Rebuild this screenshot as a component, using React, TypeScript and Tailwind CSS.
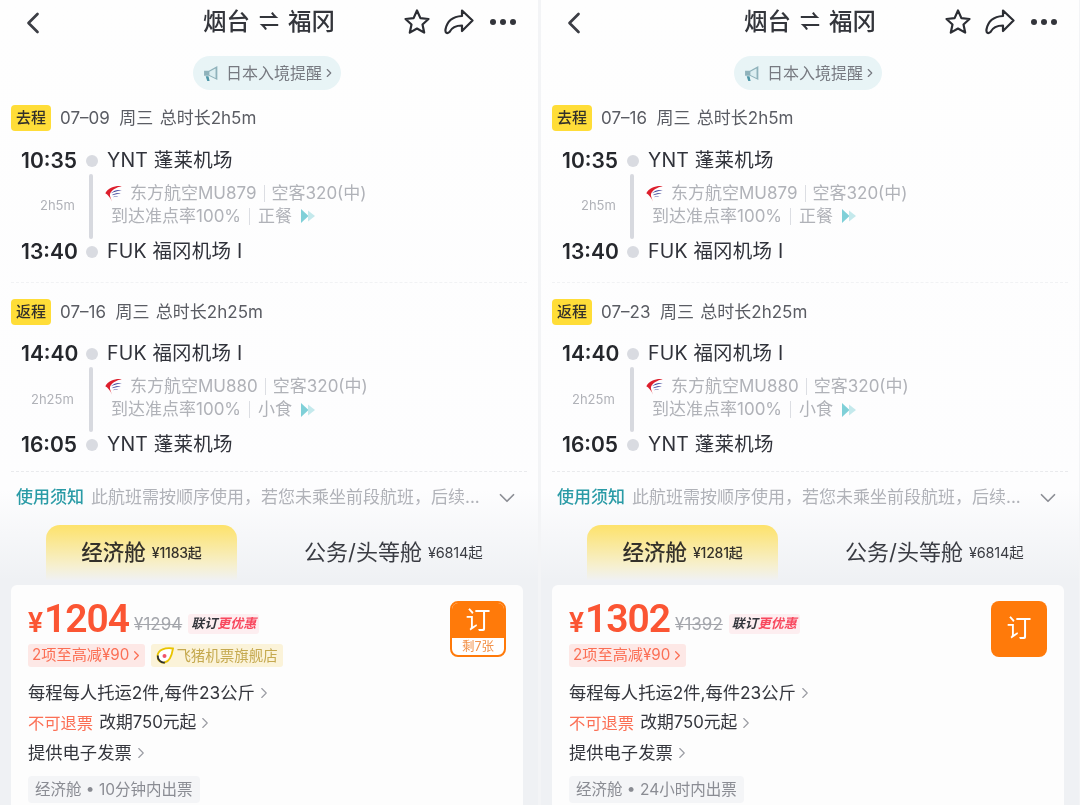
import React from 'react'
import { ChevronDown, ChevronLeft, ChevronRight } from 'lucide-react'

type Leg = {
  tag: string
  date: string
  total: string
  from: [string, string]
  to: [string, string]
  duration: string
  durationClass: string
  flight: string
  meal: string
}

type Ticket = {
  cabinFrom: string
  price: string
  oldPrice: string
  sellerBadge: boolean
  ticketing: string
  legs: Leg[]
}

const FONT = 'font-["Inter","Noto_Sans_CJK_SC",sans-serif]'

const tickets: Ticket[] = [
  {
    cabinFrom: '¥1183起',
    price: '1204',
    oldPrice: '¥1294',
    sellerBadge: true,
    ticketing: '经济舱 • 10分钟内出票',
    legs: [
      { tag: '去程', date: '07–09', total: '2h5m', from: ['10:35', 'YNT 蓬莱机场'], to: ['13:40', 'FUK 福冈机场 I'], duration: '2h5m', durationClass: 'pl-[40px]', flight: 'MU879', meal: '正餐' },
      { tag: '返程', date: '07–16', total: '2h25m', from: ['14:40', 'FUK 福冈机场 I'], to: ['16:05', 'YNT 蓬莱机场'], duration: '2h25m', durationClass: 'pl-[31px]', flight: 'MU880', meal: '小食' },
    ],
  },
  {
    cabinFrom: '¥1281起',
    price: '1302',
    oldPrice: '¥1392',
    sellerBadge: false,
    ticketing: '经济舱 • 24小时内出票',
    legs: [
      { tag: '去程', date: '07–16', total: '2h5m', from: ['10:35', 'YNT 蓬莱机场'], to: ['13:40', 'FUK 福冈机场 I'], duration: '2h5m', durationClass: 'pl-[40px]', flight: 'MU879', meal: '正餐' },
      { tag: '返程', date: '07–23', total: '2h25m', from: ['14:40', 'FUK 福冈机场 I'], to: ['16:05', 'YNT 蓬莱机场'], duration: '2h25m', durationClass: 'pl-[31px]', flight: 'MU880', meal: '小食' },
    ],
  },
]

const StarIcon = () => (
  <svg width="28" height="28" viewBox="0 0 28 28" fill="none" stroke="#2b2d33" strokeWidth="2.2" strokeLinejoin="round">
    <path d="M14 2.500l3.400 7.600 8.100.9-6 5.500 1.700 8.100L14 20.500l-7.200 4.100 1.700-8.100-6-5.500 8.100-.9z" />
  </svg>
)

const ShareIcon = () => (
  <svg width="30" height="28" viewBox="0 0 30 28" fill="none" stroke="#2b2d33" strokeWidth="2.2" strokeLinejoin="round">
    <path d="M18 2.500L28.500 12.500 18 23v-5.500c-6 0-10 1.500-12.500 6.500C3 26 1 25 1.500 21.500 3 13 9.500 8.500 18 8z" />
  </svg>
)

const HornIcon = () => (
  <svg width="17" height="17" viewBox="0 0 16 16">
    <path d="M1 5.500h4.500l8-4.500v13l-8-4H1z" fill="#8fb2bb" />
    <path d="M6 6.300l5.800-3v9L6 9.300z" fill="#dceef1" />
    <path d="M2.500 10.500h2.700l1 4.500H4z" fill="#4f97a8" />
  </svg>
)

const AirlineLogo = () => (
  <svg width="17" height="17" viewBox="0 0 16 16">
    <path d="M15.800 1.200C10.500.2 3 2.500.3 7.800c2.300 1.200 4.700 4.300 6.300 7.700-1.400-3.200-2.300-5.600-1.900-7C6.100 4.600 10.500 2.300 15.800 1.200z" fill="#dd1f2d" />
    <path d="M15.800 4.800C11.800 4.200 8 5.200 5.600 7.800c3-1.300 6.300-2.200 10.200-3z" fill="#343a94" />
    <path d="M14.800 8C11.600 7.500 8.600 8 6.400 9.600c2.700-.7 5.500-1.200 8.400-1.600z" fill="#343a94" />
    <path d="M12.500 10.800c-1.900-.4-3.700-.2-5.400.7 1.900-.3 3.600-.5 5.400-.7z" fill="#343a94" />
  </svg>
)

const MoreArrows = () => (
  <svg width="15" height="14" viewBox="0 0 15 14" className="ml-[9px]">
    <path d="M0 0l7.500 7L0 14z" fill="#7fd0d8" />
    <path d="M7 1.500l7 5.500-7 5.500z" fill="#c4e9ec" />
  </svg>
)

const FliggyIcon = () => (
  <svg width="18" height="17" viewBox="0 0 18 17">
    <path d="M17 1.500C10 .5 1.500 2 1.500 9.500c0 4 3.500 6.500 7 6 5-.6 7.500-8 8.500-14z" fill="#fff" stroke="#e9c400" strokeWidth="1.800" />
    <path d="M1.800 8.500c-.5 4.500 3.500 7.500 7 7" fill="none" stroke="#2b2d33" strokeWidth="1.800" />
    <circle cx="8.500" cy="9" r="2" fill="#f0556a" />
  </svg>
)

const Stop = ({ time, place }: { time: string; place: string }) => (
  <div className="flex h-[28px] items-center">
    <span className="w-[76px] pl-[21px] text-[21px] font-semibold text-[#25272c]">{time}</span>
    <span className="ml-[10px] h-[12px] w-[12px] rounded-full bg-[#d9dbe1]" />
    <span className="ml-[9px] text-[19.500px] text-[#30323a] tracking-[0.2px]">{place}</span>
  </div>
)

const LegBlock = ({ leg }: { leg: Leg }) => (
  <section>
    <div className="flex items-center pl-[11px]">
      <span className="flex h-[26px] w-[40px] items-center justify-center rounded-[4px] bg-[#ffdd38] text-[15px] font-medium text-[#33302a]">
        {leg.tag}
      </span>
      <span className="ml-[9px] mt-[1px] whitespace-pre text-[17px] text-[#5a5c63]">
        {`${leg.date}  周三 \u200a总时长${leg.total}`}
      </span>
    </div>
    <div className="mt-[15px]">
      <Stop time={leg.from[0]} place={leg.from[1]} />
      <div className="flex h-[63px] items-stretch">
        <div className="flex w-[89px] items-center">
          <span className={`${leg.durationClass} text-[13px] text-[#b0b2b8]`}>{leg.duration}</span>
        </div>
        <span className="my-[-1px] w-[4px] rounded-full bg-[#d7d9df]" />
        <div className="ml-[12px] flex flex-col pt-[7px] text-[17px] leading-[23px] text-[#b0b2b8]">
          <div className="flex h-[23px] items-center">
            <AirlineLogo />
            <span className="ml-[8px]">东方航空{leg.flight}</span>
            <span className="mx-[7px] h-[17px] w-px bg-[#dcdee3]" />
            <span>空客320(中)</span>
          </div>
          <div className="flex h-[23px] items-center pl-[6px]">
            <span>到达准点率100%</span>
            <span className="mx-[8px] h-[17px] w-px bg-[#dcdee3]" />
            <span>{leg.meal}</span>
            <MoreArrows />
          </div>
        </div>
      </div>
      <Stop time={leg.to[0]} place={leg.to[1]} />
    </div>
  </section>
)

const LinkRow = ({ children }: { children: React.ReactNode }) => (
  <div className="flex h-[30px] items-center text-[17.300px] text-[#34363d]">
    {children}
    <ChevronRight size={18} strokeWidth={1.5} className="text-[#9a9ca3]" />
  </div>
)

const Panel = ({ ticket }: { ticket: Ticket }) => (
  <div className={`${FONT} flex h-[805px] w-[538px] shrink-0 flex-col overflow-hidden bg-[linear-gradient(180deg,#fefefe_0,#fdfdfe_490px,#eff1f4_580px)]`}>
    <header className="relative flex h-[44px] shrink-0 items-center justify-center">
      <ChevronLeft size={36} strokeWidth={1.8} className="absolute left-[15px] top-[5px] text-[#3c3e45]" />
      <h1 className="flex items-center text-[23.500px] font-medium text-[#33353b]">
        烟台
        <span className="mx-[9px] text-[20px] font-bold leading-none">⇌</span>
        福冈
      </h1>
      <div className="absolute right-[22px] top-[8px] flex items-center gap-[13px]">
        <StarIcon />
        <ShareIcon />
        <div className="ml-[3px] flex gap-[4px]">
          <span className="h-[6px] w-[6px] rounded-full bg-[#33353b]" />
          <span className="h-[6px] w-[6px] rounded-full bg-[#33353b]" />
          <span className="h-[6px] w-[6px] rounded-full bg-[#33353b]" />
        </div>
      </div>
    </header>

    <div className="mt-[12px] flex justify-center pr-[5px]">
      <div className="flex h-[34px] w-[148px] items-center justify-center rounded-full bg-[#e8f4f6] pl-[6px] text-[16px] text-[#777a81]">
        <HornIcon />
        <span className="ml-[6px]">日本入境提醒</span>
        <ChevronRight size={14} strokeWidth={2} />
      </div>
    </div>

    <div className="mt-[15px]">
      <LegBlock leg={ticket.legs[0]} />
    </div>
    <div className="mx-[11px] mt-[16px] border-t border-dashed border-[#f1f2f4]" />
    <div className="mt-[16px]">
      <LegBlock leg={ticket.legs[1]} />
    </div>
    <div className="mx-[11px] mt-[12px] border-t border-dashed border-[#e9eaed]" />

    <div className="mt-[14px] flex h-[24px] items-center pl-[16px] text-[17px]">
      <span className="font-medium text-[#2a9ba6]">使用须知</span>
      <span className="ml-[7px] w-[397px] whitespace-nowrap text-[#b0b2b8]">此航班需按顺序使用，若您未乘坐前段航班，后续...</span>
      <ChevronDown size={26} strokeWidth={1.6} className="ml-[6px] text-[#8c8e95]" />
    </div>

    <nav className="mt-[15px] flex h-[55px] shrink-0 pl-[46px]">
      <div className="flex w-[191px] items-center justify-center rounded-t-[14px] bg-[linear-gradient(180deg,#fde26b,#f6f0d0_75%,#f0f1f3)]">
        <span className="text-[21.500px] font-medium text-[#33302a]">经济舱</span>
        <span className="ml-[6px] text-[14px] font-medium tracking-[-0.2px] text-[#33302a]">{ticket.cabinFrom}</span>
      </div>
      <div className="ml-[67px] flex items-center">
        <span className="text-[22px] text-[#3a3c43]">公务/头等舱</span>
        <span className="ml-[6px] text-[14.500px] tracking-[-0.2px] text-[#3a3c43]">¥6814起</span>
      </div>
    </nav>

    <main className="relative ml-[11px] mr-[15px] mt-[5px] flex-1 rounded-t-[6px] bg-[#fdfdfd] pl-[17px] pt-[16px]">
      <div className="flex h-[40px] items-center">
        <span className="flex items-baseline font-['Roboto',sans-serif] text-[#fb5533]">
          <span className="text-[28px] font-semibold">¥</span>
          <span className="ml-[1px] text-[39px] font-semibold leading-[40px] tracking-[-1px]">{ticket.price}</span>
        </span>
        <span className="ml-[5px] mt-[8px] text-[17px] text-[#a4a6ac] line-through">{ticket.oldPrice}</span>
        <span className="ml-[6px] mt-[5px] flex h-[20px] items-center rounded-[3px] bg-[#fdeef0] px-[3px] text-[13px] font-bold italic text-[#33353b]">
          联订<span className="text-[#f8485e]">更优惠</span>
        </span>
      </div>

      <div className="mt-[3px] flex h-[23px] items-stretch">
        <span className="flex items-center rounded-[3px] bg-[#fde8e6] pl-[4px] pr-[1px] text-[15.200px] text-[#fb6f55]">
          2项至高减¥90
          <ChevronRight size={15} strokeWidth={2} />
        </span>
        {ticket.sellerBadge && (
          <span className="ml-[6px] flex items-center rounded-[3px] bg-[#fbf3d9] px-[5px] text-[14.500px] text-[#c5a94f]">
            <FliggyIcon />
            <span className="ml-[2px]">飞猪机票旗舰店</span>
          </span>
        )}
      </div>

      <div className="mt-[11px] flex flex-col">
        <LinkRow>每程每人托运2件,每件23公斤</LinkRow>
        <LinkRow>
          <span className="mr-[6px] text-[16.300px] text-[#fb6f55]">不可退票</span>
          <span className="text-[16.800px]">改期750元起</span>
        </LinkRow>
        <LinkRow>提供电子发票</LinkRow>
      </div>

      <div className="mt-[8px] inline-flex h-[27px] items-center rounded-[4px] bg-[#f4f5f7] px-[7px] text-[15.500px] text-[#8a8c93]">
        {ticket.ticketing}
      </div>

      {ticket.sellerBadge ? (
        <div className="absolute right-[17px] top-[16px] flex h-[56px] w-[56px] flex-col overflow-hidden rounded-[8px] border-2 border-[#ff7a0a] bg-white">
          <span className="flex h-[35px] items-center justify-center bg-[#ff7a0a] text-[25px] text-white">订</span>
          <span className="flex flex-1 items-center justify-center text-[12.500px] text-[#f2924a]">剩7张</span>
        </div>
      ) : (
        <div className="absolute right-[17px] top-[16px] flex h-[56px] w-[56px] items-center justify-center rounded-[8px] bg-[#ff7a0a] text-[25px] text-white">
          订
        </div>
      )}
    </main>
  </div>
)

export default function App() {
  return (
    <div className="flex h-[805px] w-[1080px] gap-[3px] overflow-hidden bg-[#f3f4f6] blur-[0.4px]">
      {tickets.map((ticket) => (
        <Panel key={ticket.price} ticket={ticket} />
      ))}
    </div>
  )
}
